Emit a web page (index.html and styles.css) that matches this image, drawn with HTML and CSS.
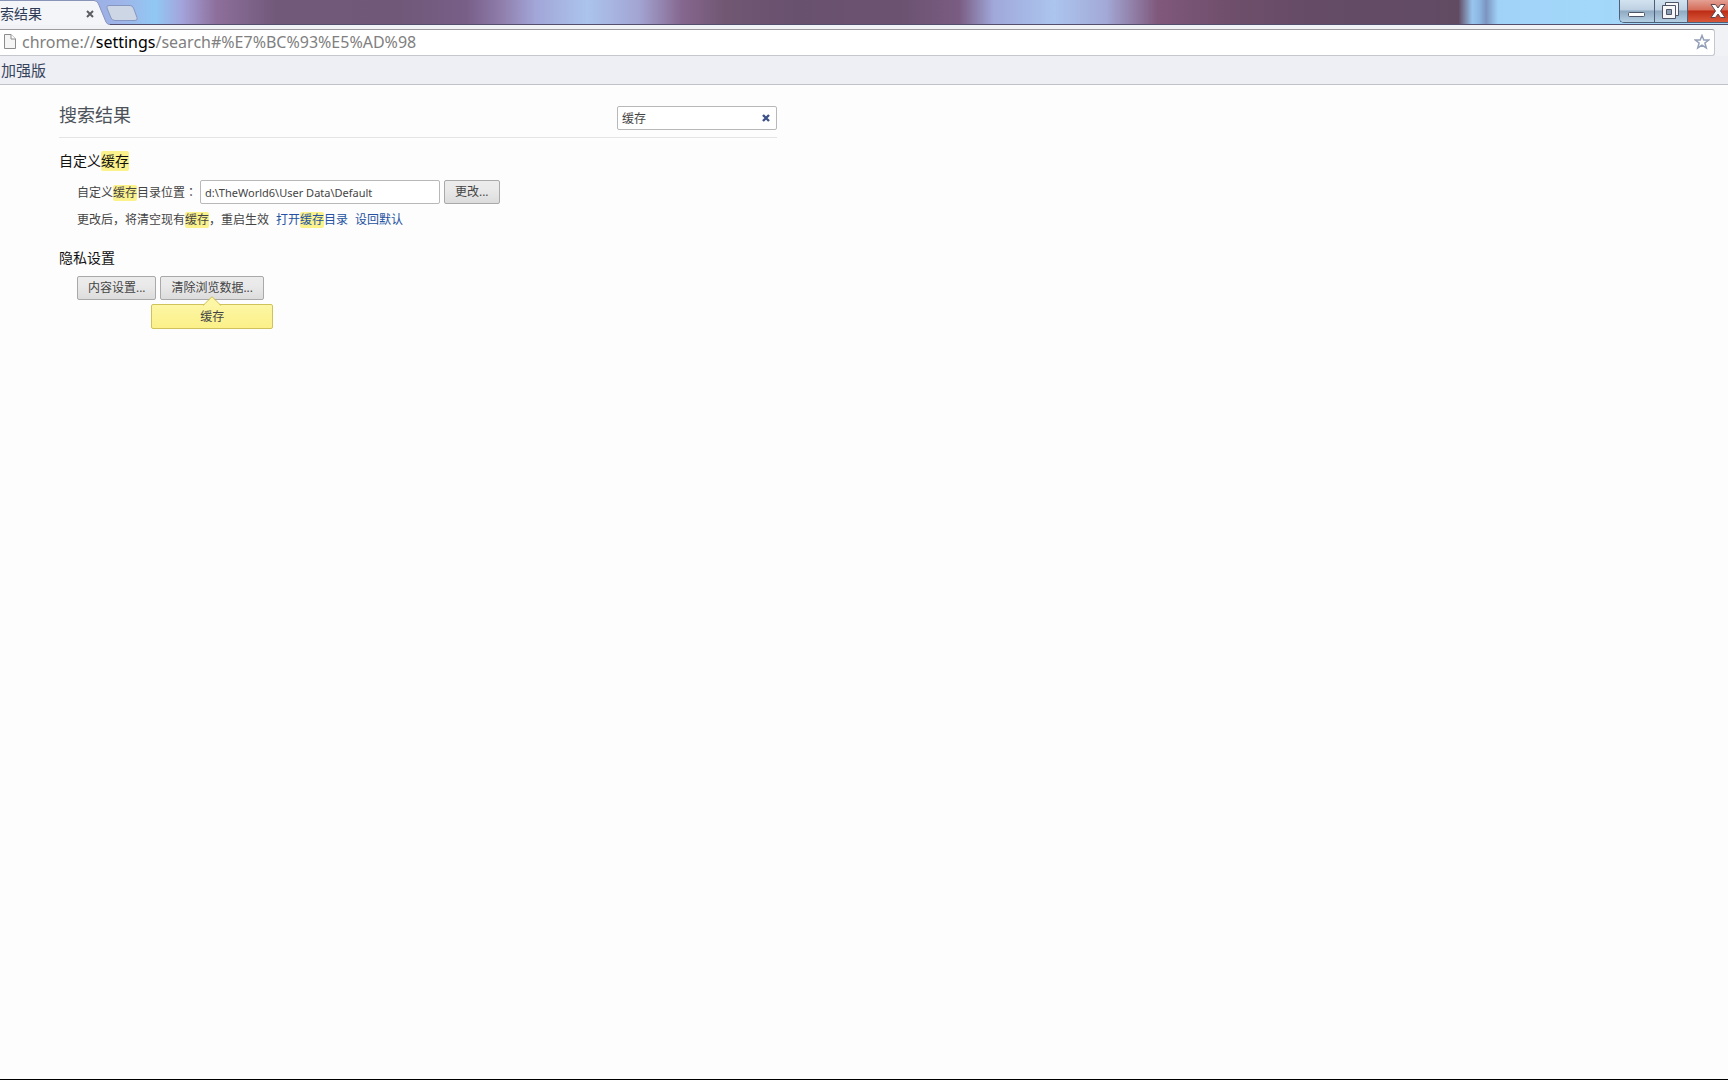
FILE: index.html
```html
<!DOCTYPE html>
<html lang="zh-CN">
<head>
<meta charset="utf-8">
<title>搜索结果</title>
<link rel="stylesheet" href="styles.css">
</head>
<body>
<header class="chrome">
  <div class="titlebar">
    <svg class="tab-shape" width="110" height="25" viewBox="0 0 110 25" aria-hidden="true">
      <path d="M0 0.500H94Q97 0.500 98.500 4L106 22Q107 24.500 110 24.500V25H0Z" fill="#f4f5f9"/>
      <path d="M0 0.500H94Q97 0.500 98.500 4L106 22Q107 24.500 110 24.500" fill="none" stroke="#8a94b8"/>
    </svg>
    <div class="tab">
      <span class="tab-title">索结果</span>
      <button class="tab-close" type="button" aria-label="关闭标签页">
        <svg width="8" height="8" viewBox="0 0 8 8"><path d="M1 1L7 7M7 1L1 7" stroke="#5b5d63" stroke-width="2"/></svg>
      </button>
    </div>
    <button class="new-tab" type="button" aria-label="新标签页">
      <svg width="32" height="17" viewBox="0 0 32 17"><path d="M3 .5H24Q26.500 .5 27.500 3L31 12.500Q32 15.500 29 15.500H9Q6 15.500 5 13L1 3Q0 .5 3 .5Z" fill="#cdd6e4" stroke="#8796c0"/></svg>
    </button>
    <div class="window-controls">
      <button class="win min" type="button" aria-label="最小化">
        <svg width="18" height="6" viewBox="0 0 18 6"><rect x=".5" y=".5" width="16" height="4" rx="1" fill="#fff" stroke="#4d5566"/></svg>
      </button>
      <button class="win max" type="button" aria-label="还原">
        <svg width="18" height="18" viewBox="0 0 18 18"><path d="M3.500 .5H16.500V13.500H3.500Z" fill="#f7f7f8" stroke="#4d5566"/><path d="M.5 3.500H13.500V16.500H.5Z" fill="#f7f7f8" stroke="#4d5566"/><path d="M4.500 7.500H9.500V12.500H4.500Z" fill="#8ca0b4" stroke="#4d5566"/></svg>
      </button>
      <button class="win close" type="button" aria-label="关闭">
        <svg width="16" height="14" viewBox="0 0 16 14"><path d="M1 .5H5.500L8 4L10.500 .5H15L10.500 7L15 13.500H10.500L8 10L5.500 13.500H1L5.500 7Z" fill="#fff" stroke="#5e4650"/></svg>
      </button>
    </div>
  </div>
  <div class="toolbar">
    <div class="omnibox">
      <svg class="page-icon" width="12" height="15" viewBox="0 0 12 15" aria-hidden="true"><path d="M.5 .5H7L11.500 5V14.500H.5Z" fill="#f5f5f5" stroke="#8c8c8c"/><path d="M7 .5V5H11.500" fill="#fff" stroke="#8c8c8c"/></svg>
      <span class="url">chrome://<b>settings</b>/search#%E7%BC%93%E5%AD%98</span>
      <button class="star" type="button" aria-label="添加书签">
        <svg width="16" height="16" viewBox="0 0 16 16"><path d="M8 1.500L9.800 6H14.700L10.900 9L12.300 14L8 11.200L3.700 14L5.100 9L1.300 6H6.200Z" fill="#fff" stroke="#93a0b8" stroke-width="1.500"/></svg>
      </button>
    </div>
  </div>
  <nav class="bookmarks"><a href="#">加强版</a></nav>
</header>
<main class="content">
  <div class="page-head">
    <h1>搜索结果</h1>
    <div class="search">
      <input type="text" value="缓存" aria-label="搜索设置">
      <button type="button" aria-label="清除">
        <svg width="8" height="8" viewBox="0 0 8 8"><path d="M1 1L7 7M7 1L1 7" stroke="#3b5286" stroke-width="2.400"/></svg>
      </button>
    </div>
  </div>
  <section>
    <h2>自定义<mark>缓存</mark></h2>
    <div class="row">
      <label for="cache-dir">自定义<mark>缓存</mark>目录位置<span class="colon" lang="zh-TW">：</span></label>
      <input class="dir" id="cache-dir" type="text" value="d:\TheWorld6\User Data\Default">
      <button class="btn" type="button">更改...</button>
    </div>
    <p class="note">更改后，将清空现有<mark>缓存</mark>，重启生效<a href="#">打开<mark>缓存</mark>目录</a><a href="#">设回默认</a></p>
  </section>
  <section>
    <h2>隐私设置</h2>
    <div class="row">
      <button class="btn" type="button">内容设置...</button>
      <div class="with-bubble">
        <button class="btn" type="button">清除浏览数据...</button>
        <div class="bubble">缓存
          <svg width="18" height="10" viewBox="0 0 18 10" aria-hidden="true"><path d="M0 10L9 1L18 10Z" fill="#fdf6a4"/><path d="M0 9.500L9 .7L18 9.500" fill="none" stroke="#cfc04c"/></svg>
        </div>
      </div>
    </div>
  </section>
</main>
</body>
</html>
```
FILE: styles.css
```css
* { box-sizing: border-box; }

body {
  margin: 0;
  min-height: 100vh;
  background: #fdfdfd;
  border-bottom: 1px solid #000;
  font: 12px/16px "Open Sans", "Noto Sans CJK SC", sans-serif;
  color: #444;
  overflow-x: hidden;
}

button, input { font: inherit; color: inherit; }
button { border: 0; padding: 0; background: none; }
svg { display: block; }
a { text-decoration: none; }

.titlebar {
  position: relative;
  display: flex;
  height: 25px;
  border-bottom: 1px solid #54506b;
  background: linear-gradient(90deg, #8ba3dd 0, #9fb4e8 7%, #90c8f4 9%, #a4a4dc 10.500%, #8e6f9c 12.500%, #71597a 16%, #6f5878 23%, #785f88 27%, #8f7dab 29%, #a2a6d8 31%, #abc4ec 34%, #a3a4d2 37%, #85668e 39.500%, #715772 42%, #68516f 46%, #6b5270 52%, #7a5c82 55.500%, #a0a8da 57.500%, #abc5ee 61%, #a3a9d6 64%, #80587c 67%, #6f4f6b 71%, #654b66 76%, #614b63 84.400%, #98c5ee 85.200%, #8cb7e2 85.600%, #7b94c0 86%, #a0d2f7 86.700%, #a3d8fa 92%, #a6d3f6 100%);
}

.tab-shape { position: absolute; left: 0; top: 0; }

.tab {
  position: relative;
  display: flex;
  align-items: center;
  justify-content: space-between;
  width: 94px;
  height: 25px;
  padding-top: 2px;
  font-size: 14px;
  color: #2d3b55;
}

.new-tab { position: relative; margin: 5px 0 0 12px; align-self: flex-start; }

.window-controls {
  display: flex;
  height: 23px;
  margin-left: auto;
  border: 1px solid #4e5f78;
  border-width: 0 0 1px 1px;
  border-radius: 0 0 0 5px;
  overflow: hidden;
}

.win {
  display: flex;
  align-items: center;
  justify-content: center;
  width: 35px;
  border-right: 1px solid #4e5f78;
  background: linear-gradient(#d3e2ef 0, #bdd0e2 45%, #8fa9c1 50%, #b5cfe4 100%);
}
.win.min { align-items: flex-end; padding-bottom: 4px; }
.win.max { width: 33px; padding-bottom: 1px; }
.win.close {
  width: 40px;
  padding-left: 19px;
  border-right: 0;
  background: linear-gradient(#e3a093 0, #d56d59 45%, #bd2c15 50%, #d8583a 100%);
}

.toolbar {
  padding: 4px 13px 0 0;
  background: #f1f2f6;
}

.omnibox {
  display: flex;
  align-items: center;
  height: 27px;
  padding: 0 4px 2px;
  background: #fff;
  border: 1px solid #c5c7ce;
  border-top-color: #9c9a9c;
  border-left: 0;
  border-radius: 0 3px 3px 0;
}

.url {
  margin-left: 6px;
  font-family: "Noto Sans", "Open Sans", sans-serif;
  font-size: 16px;
  line-height: 24px;
  color: #808080;
}
.url b { font-weight: 400; color: #000; }
.star { margin-left: auto; }

.bookmarks {
  height: 29px;
  padding-left: 1px;
  border-bottom: 1px solid #c0c2ca;
  background: #eeeff4;
  font-size: 15px;
  line-height: 28px;
}
.bookmarks a { color: #38445e; }

.content { max-width: 777px; padding: 21px 0 40px 59px; }

.page-head {
  display: flex;
  justify-content: space-between;
  height: 32px;
  border-bottom: 1px solid #e4e4e4;
}

h1, h2, p { margin: 0; font-weight: 400; }
h1 { font-size: 18px; line-height: 18px; color: #4c5259; }
h2 { font-size: 14px; line-height: 20px; color: #111; }

mark { display: inline-block; background: #fbf28c; border-radius: 2px; color: inherit; }
h2 mark { line-height: 20px; }
.colon { font-family: "Noto Sans CJK TC", sans-serif; }

.search {
  display: flex;
  align-items: center;
  width: 160px;
  height: 24px;
  padding-right: 6px;
  background: #fff;
  border: 1px solid #b8b8b8;
  border-radius: 2px;
}
.search input { flex: 1; min-width: 0; height: 22px; padding: 0 4px; border: 0; background: none; }

section { margin-top: 13px; }
section + section { margin-top: 20px; }

.row { display: flex; align-items: center; gap: 4px; margin: 9px 0 0 18px; }
section + section .row { margin-top: 8px; }

.dir {
  width: 240px;
  height: 24px;
  margin-left: -1px;
  padding: 0 4px;
  background: #fff;
  border: 1px solid #b8b8b8;
  border-radius: 2px;
  font-family: "Noto Sans", "Open Sans", sans-serif;
  font-size: 11px;
}

.btn {
  height: 24px;
  padding: 0 10px;
  border: 1px solid #a9a9a9;
  border-radius: 2px;
  background: linear-gradient(#ececec, #e9e9e9 40%, #dcdcdc);
  white-space: nowrap;
}

.note { margin: 8px 0 0 18px; }
.note a { margin-left: 7px; color: #2452a0; }

.with-bubble { position: relative; }
.bubble {
  position: absolute;
  top: 28px;
  left: 50%;
  width: 122px;
  height: 25px;
  margin-left: -61px;
  border: 1px solid #d0c25a;
  border-radius: 2px;
  background: linear-gradient(#fdf6a4, #fbf088);
  line-height: 23px;
  text-align: center;
}
.bubble svg { position: absolute; left: 51px; top: -9px; }
```
